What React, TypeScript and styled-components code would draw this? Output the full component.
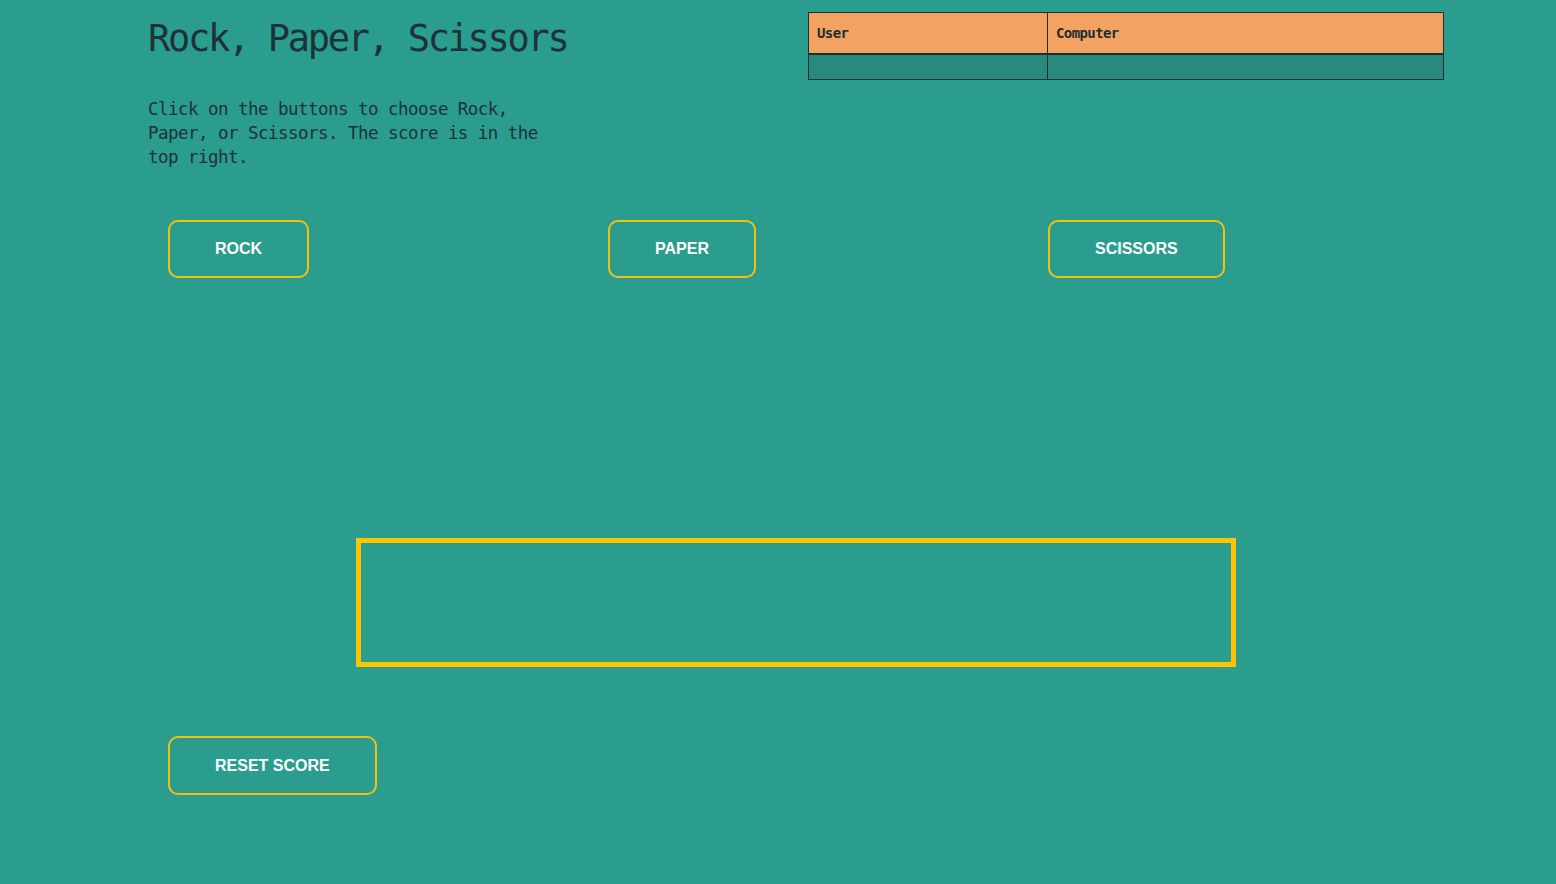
import React from "react";
import styled, { createGlobalStyle } from "styled-components";

const Global = createGlobalStyle`
  html, body { margin: 0; padding: 0; background: #2a9d8f; }
  body { font-family: "DejaVu Sans Mono", monospace; }
`;

const Page = styled.div`
  width: 1296px;
  margin-left: 148px;
  display: flex;
  flex-direction: column;
`;

const Header = styled.div`
  display: flex;
  justify-content: space-between;
  align-items: flex-start;
`;

const Intro = styled.div`
  width: 420px;
`;

const Title = styled.h1`
  margin: 17px 0 0 0;
  font-family: "DejaVu Sans Mono", monospace;
  font-weight: 400;
  font-size: 37px;
  line-height: 44px;
  letter-spacing: -2.3px;
  color: #1d3236;
`;

const Lead = styled.p`
  margin: 36px 0 0 0;
  width: 410px;
  font-family: "DejaVu Sans Mono", monospace;
  font-size: 17.5px;
  line-height: 24px;
  letter-spacing: -0.54px;
  color: #1d3236;
`;

const ScoreTable = styled.table`
  flex: 0 0 auto;
  margin-top: 12px;
  width: 636px;
  table-layout: fixed;
  border-collapse: collapse;
  border: 1px solid #1d2f30;
`;

const HeadCell = styled.th<{ $w: number }>`
  width: ${(p) => p.$w}px;
  height: 40px;
  padding: 0 8px;
  text-align: left;
  background: #f4a261;
  border: 1px solid #1d2f30;
  border-bottom: 2px solid #1d2f30;
  font-family: "DejaVu Sans Mono", monospace;
  font-weight: 700;
  font-size: 14px;
  letter-spacing: -0.6px;
  color: #1d2f30;
`;

const BodyCell = styled.td`
  height: 24px;
  padding: 0;
  background: #288a7e;
  border: 1px solid #1d2f30;
`;

const ChoiceRow = styled.div`
  display: flex;
  margin-top: 51px;
`;

const ChoiceCell = styled.div`
  flex: 0 0 440px;
  padding-left: 20px;
  box-sizing: border-box;
`;

const Button = styled.button<{ $h?: number }>`
  height: ${(p) => p.$h ?? 58}px;
  padding: 0 45px;
  background: transparent;
  border: 2px solid #f2c20f;
  border-radius: 10px;
  color: #ffffff;
  font-family: "Liberation Sans", Arial, sans-serif;
  font-weight: 700;
  font-size: 16px;
  cursor: pointer;
`;

const Result = styled.div`
  align-self: center;
  margin-top: 260px;
  width: 880px;
  height: 129px;
  box-sizing: border-box;
  border: 5px solid #ffc300;
`;

const ResetRow = styled.div`
  margin-top: 69px;
  padding-left: 20px;
`;

export default function App() {
  return (
    <>
      <Global />
      <Page>
        <Header>
          <Intro>
            <Title>Rock, Paper, Scissors</Title>
            <Lead>
              Click on the buttons to choose Rock, Paper, or Scissors. The score is in the top right.
            </Lead>
          </Intro>
          <ScoreTable>
            <thead>
              <tr>
                <HeadCell $w={222}>User</HeadCell>
                <HeadCell $w={379}>Computer</HeadCell>
              </tr>
            </thead>
            <tbody>
              <tr>
                <BodyCell />
                <BodyCell />
              </tr>
            </tbody>
          </ScoreTable>
        </Header>
        <ChoiceRow>
          <ChoiceCell><Button>ROCK</Button></ChoiceCell>
          <ChoiceCell><Button>PAPER</Button></ChoiceCell>
          <ChoiceCell><Button>SCISSORS</Button></ChoiceCell>
        </ChoiceRow>
        <Result />
        <ResetRow>
          <Button $h={59}>RESET SCORE</Button>
        </ResetRow>
      </Page>
    </>
  );
}
